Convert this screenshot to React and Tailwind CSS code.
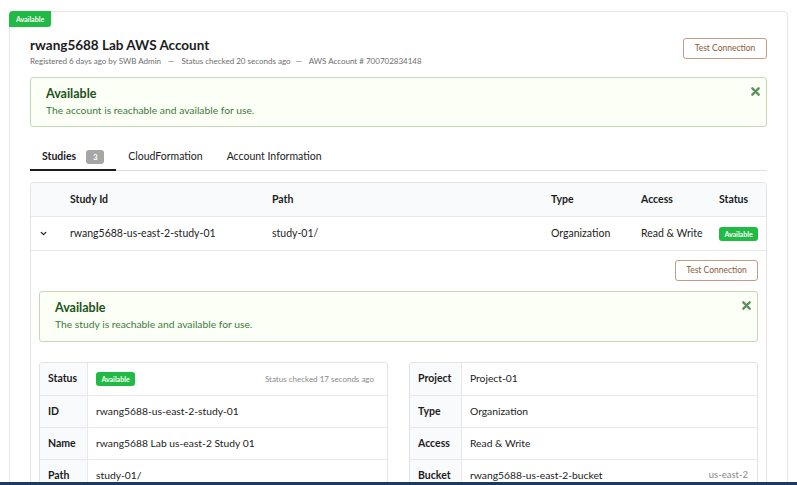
import { ChevronDown } from "lucide-react";

const FONT = { fontFamily: "Lato, 'Open Sans', sans-serif" };

function Badge({ className = "" }) {
  return (
    <span
      className={`inline-flex items-center justify-center bg-[#21ba45] text-[7px] font-bold text-white ${className}`}
    >
      Available
    </span>
  );
}

function CloseX() {
  return (
    <svg width="9" height="9" viewBox="0 0 10 10" className="text-[#5f8f5c]">
      <path d="M1.5 1.5 L8.5 8.5 M8.5 1.5 L1.5 8.5" stroke="currentColor" strokeWidth="2.6" strokeLinecap="round" />
    </svg>
  );
}

function Message({ text, className = "" }) {
  return (
    <div
      className={`relative rounded-[3px] border border-[#c4d9b4] bg-[#fcfff5] pl-[15px] pt-[7px] ${className}`}
    >
      <div className="text-[12.5px] font-bold leading-[17px] text-[#1a531b]">Available</div>
      <div className="mt-[1px] text-[10.3px] leading-[14px] text-[#3d7a3d]">{text}</div>
      <div className="absolute right-[6px] top-[9px]">
        <CloseX />
      </div>
    </div>
  );
}

function TestButton({ className = "" }) {
  return (
    <button
      className={`flex items-center justify-center rounded-[3px] border border-[#c89c84] bg-white text-[8.5px] text-[#8b5a3c] ${className}`}
    >
      Test Connection
    </button>
  );
}

function DetailTable({ rows, labelWidth }) {
  return (
    <div className="overflow-hidden rounded-[3px] border border-[#e3e3e3]">
      {rows.map((r, i) => (
        <div key={r.label} className={`flex h-[32px] ${i > 0 ? "border-t border-[#e8e8e8]" : ""}`}>
          <div
            className={`flex shrink-0 items-center border-r border-[#e8e8e8] bg-[#f9fafb] pl-[8px] text-[10.5px] font-bold text-[#1b1c1d] ${labelWidth}`}
          >
            {r.label}
          </div>
          <div className="flex flex-1 items-center justify-between pl-[8px] pr-[9px] text-[10.3px] text-[#222]">
            {r.value}
            {r.aside}
          </div>
        </div>
      ))}
    </div>
  );
}

export default function App() {
  const leftRows = [
    {
      label: "Status",
      value: <Badge className="h-[14px] w-[39px] rounded-[3px]" />,
      aside: <span className="mr-[4px] text-[8px] text-[#8a8a8a]">Status checked 17 seconds ago</span>,
    },
    { label: "ID", value: "rwang5688-us-east-2-study-01" },
    { label: "Name", value: "rwang5688 Lab us-east-2 Study 01" },
    { label: "Path", value: "study-01/" },
  ];
  const rightRows = [
    { label: "Project", value: "Project-01" },
    { label: "Type", value: "Organization" },
    { label: "Access", value: "Read & Write" },
    {
      label: "Bucket",
      value: "rwang5688-us-east-2-bucket",
      aside: <span className="text-[9.5px] text-[#8a8a8a]">us-east-2</span>,
    },
  ];

  return (
    <div className="h-[485px] overflow-hidden bg-white px-[9px] pt-[11px]" style={FONT}>
      <div className="relative rounded-[4px] border border-[#e6e6e6] pb-10 pl-[20px] pr-[20px] pt-[23px]">
        <Badge className="absolute -left-px -top-px h-[16px] w-[42px] rounded-tl-[4px] rounded-br-[3px]" />

        <div className="flex items-start justify-between">
          <div>
            <h1 className="text-[13.5px] font-bold leading-[20px] text-[#1b1c1d]">rwang5688 Lab AWS Account</h1>
            <p className="text-[8px] leading-[12px] text-[#6e6e6e]">
              Registered 6 days ago by SWB Admin <span className="mx-[5px]">—</span> Status checked 20 seconds ago
              <span className="mx-[5px]">—</span> AWS Account # 700702834148
            </p>
          </div>
          <TestButton className="mt-[3px] h-[21px] w-[84px]" />
        </div>

        <Message text="The account is reachable and available for use." className="mt-[10px] h-[50px]" />

        <div className="mt-[17px] flex h-[27px] border-b border-[#dedede]">
          <div className="-mb-px flex items-center border-b-2 border-[#1b1c1d] px-3">
            <span className="text-[10.5px] font-bold text-[#1b1c1d]">Studies</span>
            <span className="ml-[10px] flex h-[14px] w-[18px] items-center justify-center rounded-[3px] bg-[#a6a6a6] text-[8px] font-bold text-white">
              3
            </span>
          </div>
          <div className="flex items-center px-3 text-[10.5px] text-[#222]">CloudFormation</div>
          <div className="flex items-center px-3 text-[10.5px] text-[#222]">Account Information</div>
        </div>

        <div className="mt-[11px] rounded-[4px] border border-[#e3e3e3]">
          <div className="grid h-[33px] grid-cols-[27px_202px_279px_90px_78px_1fr] items-center rounded-t-[4px] bg-[#f9fafb] text-[10.5px] font-bold text-[#1b1c1d]">
            <div />
            <div className="pl-3">Study Id</div>
            <div className="pl-3">Path</div>
            <div className="pl-3">Type</div>
            <div className="pl-3">Access</div>
            <div className="pl-3">Status</div>
          </div>
          <div className="grid h-[34px] grid-cols-[27px_202px_279px_90px_78px_1fr] items-center border-t border-[#e8e8e8] text-[10.5px] text-[#222]">
            <div className="flex justify-end pr-[10px]">
              <ChevronDown size={9} strokeWidth={3.5} className="text-[#222]" />
            </div>
            <div className="pl-3">rwang5688-us-east-2-study-01</div>
            <div className="pl-3">study-01/</div>
            <div className="pl-3">Organization</div>
            <div className="pl-3">Read &amp; Write</div>
            <div className="pl-3">
              <Badge className="h-[14px] w-[39px] rounded-[3px]" />
            </div>
          </div>
          <div className="border-t border-[#e8e8e8] px-[8px] pt-[9px]">
            <div className="flex justify-end">
              <TestButton className="h-[21px] w-[83px]" />
            </div>
            <Message text="The study is reachable and available for use." className="mt-[10px] h-[51px]" />
            <div className="mt-[20px] grid grid-cols-2 gap-[21px]">
              <DetailTable rows={leftRows} labelWidth="w-[48px]" />
              <DetailTable rows={rightRows} labelWidth="w-[52px]" />
            </div>
          </div>
        </div>
      </div>
      <div className="fixed bottom-0 left-0 right-0 h-[3px] bg-[#1c3a5b]" />
    </div>
  );
}
